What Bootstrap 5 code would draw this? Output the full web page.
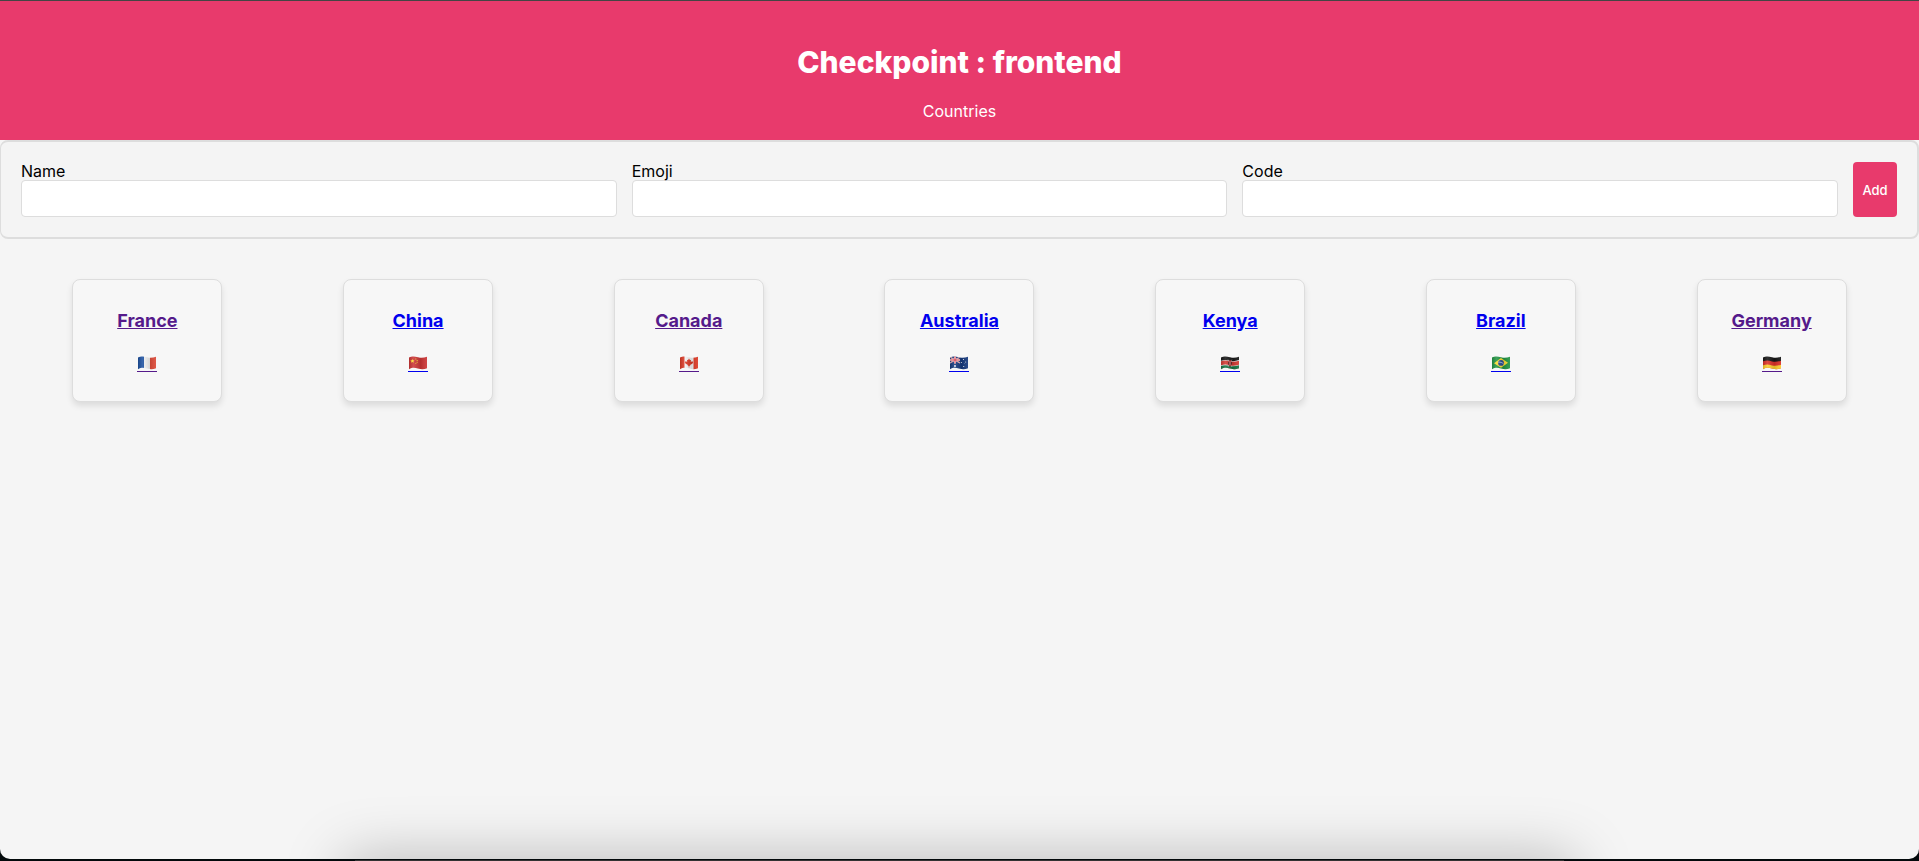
<!DOCTYPE html>
<html lang="en">
<head>
<meta charset="utf-8">
<meta name="viewport" content="width=device-width, initial-scale=1">
<title>Checkpoint : frontend</title>
<link href="https://cdn.jsdelivr.net/npm/bootstrap@5.3.0/dist/css/bootstrap.min.css" rel="stylesheet">
<style>
  body { background: #03090b; color: #000; font-family: Inter, "Liberation Sans", sans-serif; font-size: 16px; line-height: 18px; }
  .app-window { background: #f5f5f5; border-top: 1px solid #444; border-radius: 0 0 10px 10px; }
  .site-header { background: #e83a6c; padding: 42px 20px 19px; }
  .site-header h1 { font-size: 30px; line-height: 38px; font-weight: 800; margin-bottom: 21px; }
  .site-header a { font-size: 16px; line-height: 19px; }
  .country-form { gap: 15px; padding: 20px; background: #f4f4f4; border: solid #ddd; border-width: 2px 2px 2px 1px; border-radius: 8px; }
  .country-form .form-control { height: 37px; padding: 8px; border: 1px solid #ddd; border-radius: 4px; }
  .btn-add { background: #e83a6c; color: #fff; width: 44px; padding: 0; border: 0; border-radius: 4px; font-size: 13px; line-height: 16px; font-weight: 500; }
  .btn-add:hover { background: #cf2f5e; color: #fff; }
  .country-list { gap: 16px; padding: 40px 20px; }
  .country-card { width: 150px; height: 123px; padding-top: 29px; background: #f7f7f7; border: 1px solid #ddd; border-radius: 8px; box-shadow: 0 4px 6px rgba(0,0,0,.1); color: #00e; }
  .country-card.seen { color: #551a8b; }
  .country-card h2 { font-size: 18px; line-height: 24px; font-weight: 700; text-decoration: underline; margin-bottom: 23px; }
  .flag { width: 20px; height: 16px; border-bottom: 1px solid; }
  .flag svg { display: block; width: 18px; height: 14px; margin: 0 auto; }
  .dock-shadow { left: 18%; right: 18%; top: 100%; height: 60px; box-shadow: 0 0 60px rgba(0,0,0,.26); }
  .desktop-edge { height: 2px; }
  .desktop-edge span { width: 63%; height: 1px; background: #333; }
</style>
</head>
<body class="min-vh-100 d-flex flex-column">
<svg width="0" height="0" class="position-absolute" aria-hidden="true">
  <defs>
    <clipPath id="wave"><path d="M0 1.5C3-.1 5.5.4 9 1.3S15 1.9 18 .7V12.2C15 13.4 12.5 13.4 9 12.5S3 11.5 0 13.2Z"/></clipPath>
    <linearGradient id="fold"><stop offset="0" stop-color="#000" stop-opacity=".15"/><stop offset=".25" stop-color="#fff" stop-opacity=".12"/><stop offset=".65" stop-color="#000" stop-opacity=".12"/><stop offset="1" stop-color="#fff" stop-opacity=".08"/></linearGradient>
  </defs>
</svg>
<div class="app-window flex-grow-1 position-relative overflow-hidden">
  <header class="site-header text-white text-center">
    <h1>Checkpoint : frontend</h1>
    <a href="#" class="d-block text-white text-decoration-none">Countries</a>
  </header>
  <main>
    <form class="country-form d-flex">
      <div class="flex-fill"><label class="d-block" for="name">Name</label><input class="form-control" id="name" type="text"></div>
      <div class="flex-fill"><label class="d-block" for="emoji">Emoji</label><input class="form-control" id="emoji" type="text"></div>
      <div class="flex-fill"><label class="d-block" for="code">Code</label><input class="form-control" id="code" type="text"></div>
      <button class="btn btn-add" type="button">Add</button>
    </form>
    <div class="country-list d-flex flex-wrap justify-content-around">
      <a href="#" class="country-card seen d-flex flex-column align-items-center text-decoration-none">
        <h2>France</h2>
        <span class="flag"><svg viewBox="0 0 18 14"><g clip-path="url(#wave)"><path fill="#f4f4f4" d="M0 0h18v14H0z"/><path fill="#1c50a0" d="M0 0h6v14H0z"/><path fill="#dc4a38" d="M12 0h6v14h-6z"/><path fill="url(#fold)" d="M0 0h18v14H0z"/></g></svg></span>
      </a>
      <a href="#" class="country-card d-flex flex-column align-items-center text-decoration-none">
        <h2>China</h2>
        <span class="flag"><svg viewBox="0 0 18 14"><g clip-path="url(#wave)"><path fill="#cc3535" d="M0 0h18v14H0z"/><path fill="#fd3" d="m3.4 3 .6 1.3 1.5.1-1.1 1 .3 1.4-1.3-.7-1.3.7.3-1.4-1.1-1 1.5-.1zM6.4 2.5h.9v.9h-.9zM7.7 4h.9v.9h-.9zM7.7 5.8h.9v.9h-.9zM6.4 7.2h.9v.9h-.9z"/><path fill="url(#fold)" d="M0 0h18v14H0z"/></g></svg></span>
      </a>
      <a href="#" class="country-card seen d-flex flex-column align-items-center text-decoration-none">
        <h2>Canada</h2>
        <span class="flag"><svg viewBox="0 0 18 14"><g clip-path="url(#wave)"><path fill="#f4f4f4" d="M0 0h18v14H0z"/><path fill="#dc3a26" d="M0 0h4.5v14H0zM13.5 0H18v14h-4.500zM9 2.500l1.100 1.700 1-.4-.3 2.200 1.300-.8 1.100.9-.6 1.400-2.500 1.500.1.900-.9-.1V11.500h-.6V9.800l-.9.1.1-.9-2.500-1.500-.6-1.400 1.100-.9 1.300.8-.3-2.200 1 .4z"/><path fill="url(#fold)" d="M0 0h18v14H0z"/></g></svg></span>
      </a>
      <a href="#" class="country-card d-flex flex-column align-items-center text-decoration-none">
        <h2>Australia</h2>
        <span class="flag"><svg viewBox="0 0 18 14"><g clip-path="url(#wave)"><path fill="#163a7e" d="M0 0h18v14H0z"/><path stroke="#fff" stroke-width="1.100" d="m0 1 10 6M10 1 0 7"/><path stroke="#fff" stroke-width="2" d="M5 0v7.500M0 4h10"/><path stroke="#d8394a" stroke-width="1.200" d="M5 0v7.500M0 4h10"/><path stroke="#d8394a" stroke-width=".5" d="m0 1 10 6M10 1 0 7"/><g fill="#fff"><circle cx="5" cy="10" r=".9"/><circle cx="13.500" cy="3.500" r=".6"/><circle cx="11.500" cy="6.500" r=".5"/><circle cx="15.700" cy="6" r=".5"/><circle cx="13.700" cy="10.500" r=".6"/><circle cx="14.500" cy="7.700" r=".3"/></g><path fill="url(#fold)" d="M0 0h18v14H0z"/></g></svg></span>
      </a>
      <a href="#" class="country-card d-flex flex-column align-items-center text-decoration-none">
        <h2>Kenya</h2>
        <span class="flag"><svg viewBox="0 0 18 14"><g clip-path="url(#wave)"><path fill="#171717" d="M0 0h18v6H0z"/><path fill="#eee" d="M0 4.700c4-1.200 6-.6 9 .1s6 .2 9-.7V14H0z"/><path fill="#d33a32" d="M0 5.300c4-1.200 6-.6 9 .1s6 .2 9-.7V14H0z"/><path fill="#eee" d="M0 9.300c4-1.200 6-.6 9 .1s6 .2 9-.7V14H0z"/><path fill="#147342" d="M0 9.900c4-1.200 6-.6 9 .1s6 .2 9-.7V14H0z"/><path stroke="#eee" stroke-width=".4" d="m7 3.500 4 7.500m0-7.500L7 11"/><ellipse cx="9" cy="7.200" rx="1.600" ry="3.200" fill="#a81e20"/><path stroke="#eee" stroke-width=".6" d="M9 5v4.500"/><path stroke="#222" stroke-width=".6" d="M7.600 6v2.500m2.800-2.500v2.500"/><path fill="url(#fold)" d="M0 0h18v14H0z"/></g></svg></span>
      </a>
      <a href="#" class="country-card d-flex flex-column align-items-center text-decoration-none">
        <h2>Brazil</h2>
        <span class="flag"><svg viewBox="0 0 18 14"><g clip-path="url(#wave)"><path fill="#239544" d="M0 0h18v14H0z"/><path fill="#fadc33" d="m9 2 7 4.800-7 5-7-4.600z"/><circle cx="9" cy="6.900" r="2.900" fill="#27478e"/><path fill="none" stroke="#dde8ee" stroke-width=".7" d="M6.300 6.200c2-.3 4 .3 5.300 1.800"/><path fill="url(#fold)" d="M0 0h18v14H0z"/></g></svg></span>
      </a>
      <a href="#" class="country-card seen d-flex flex-column align-items-center text-decoration-none">
        <h2>Germany</h2>
        <span class="flag"><svg viewBox="0 0 18 14"><g clip-path="url(#wave)"><path fill="#151515" d="M0 0h18v6H0z"/><path fill="#dc3027" d="M0 5.300c4-1.200 6-.6 9 .1s6 .2 9-.7V14H0z"/><path fill="#fbce2c" d="M0 9.300c4-1.200 6-.6 9 .1s6 .2 9-.7V14H0z"/><path fill="url(#fold)" d="M0 0h18v14H0z"/></g></svg></span>
      </a>
    </div>
  </main>
  <div class="dock-shadow position-absolute"></div>
</div>
<div class="desktop-edge d-flex justify-content-center align-items-end"><span></span></div>
<script src="https://cdn.jsdelivr.net/npm/bootstrap@5.3.0/dist/js/bootstrap.bundle.min.js"></script>
</body>
</html>
